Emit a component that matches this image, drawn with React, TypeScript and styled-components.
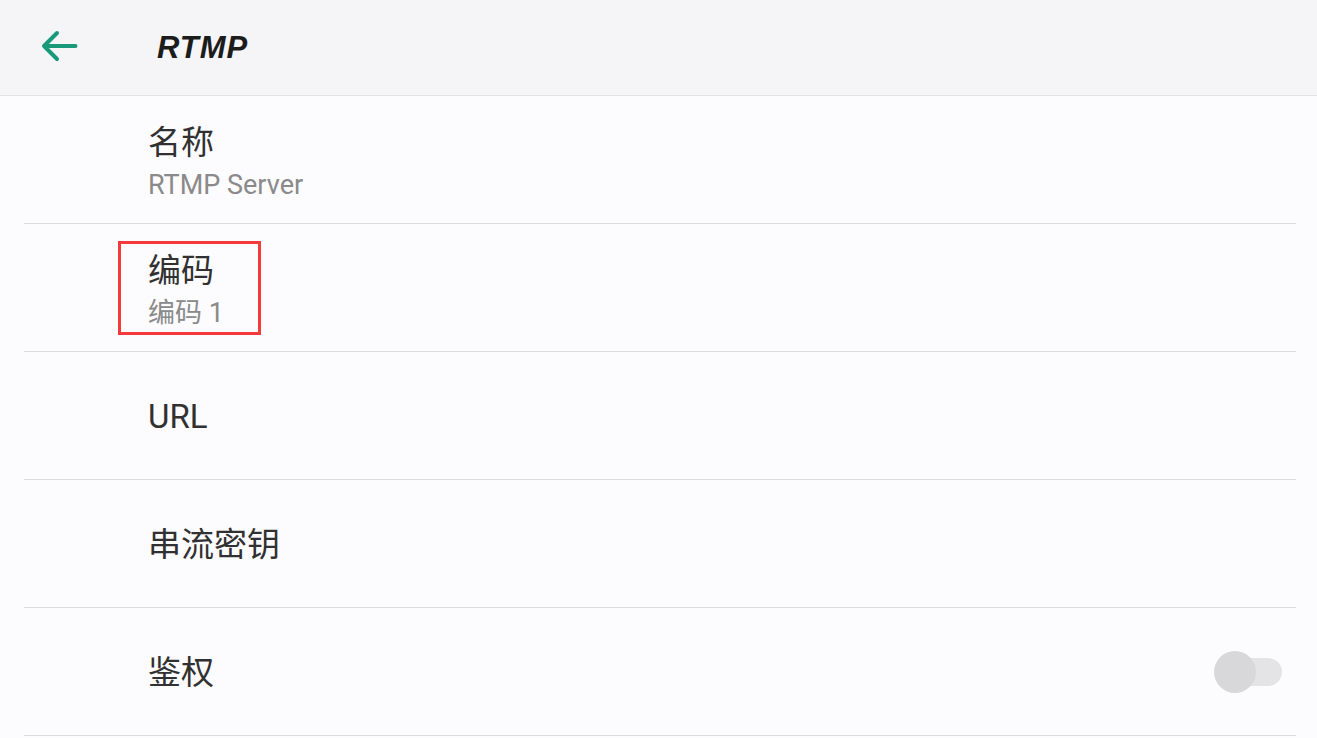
import React from 'react';
import styled, {createGlobalStyle} from 'styled-components';

const GlobalStyle = createGlobalStyle`
  html, body {
    margin: 0;
    padding: 0;
    background: #fcfbfd;
  }
  body {
    font-family: Roboto, "Noto Sans CJK SC", "Noto Sans", sans-serif;
  }
`;

const Page = styled.div`
  width: 1317px;
  min-height: 738px;
  background: #fcfbfd;
`;

const Header = styled.header`
  display: flex;
  align-items: center;
  height: 95px;
  padding-left: 40px;
  background: #f5f4f6;
  border-bottom: 1px solid #e2e1e3;
`;

const BackIcon = styled.svg`
  width: 38px;
  height: 36px;
  margin-bottom: 4px;
  flex-shrink: 0;
`;

const Title = styled.h1`
  margin: 0 0 0 79px;
  font-family: "Liberation Sans", Arial, sans-serif;
  font-size: 31px;
  font-weight: 700;
  font-style: italic;
  letter-spacing: 1px;
  color: #1c1c1c;
`;

const List = styled.div`
  margin: 0 21px 0 24px;
`;

const Row = styled.div`
  position: relative;
  display: flex;
  align-items: center;
  justify-content: space-between;
  height: 127px;
  padding-left: 124px;
  padding-right: 14px;
  border-bottom: 1px solid #dcdbdd;
`;

const TextBlock = styled.div<{$twoLine?: boolean}>`
  display: flex;
  flex-direction: column;
  padding-top: ${p => (p.$twoLine ? '5px' : '3px')};
`;

const Primary = styled.div`
  font-size: 33px;
  line-height: 40px;
  color: #313131;
`;

const Secondary = styled.div`
  margin-top: 5px;
  font-size: 27px;
  line-height: 34px;
  color: #8a8a8a;
`;

const Highlight = styled.div`
  position: absolute;
  left: 94px;
  top: 17px;
  width: 137px;
  height: 88px;
  border: 3px solid #f43a3a;
  pointer-events: none;
`;

const Switch = styled.div`
  position: relative;
  width: 68px;
  height: 42px;
`;

const Track = styled.div`
  position: absolute;
  right: 0;
  top: 7px;
  width: 54px;
  height: 28px;
  border-radius: 14px;
  background: #e4e3e5;
`;

const Thumb = styled.div`
  position: absolute;
  left: 0;
  top: 0;
  width: 42px;
  height: 42px;
  border-radius: 50%;
  background: #d8d7d9;
`;

type Item = {
  title: string;
  value?: string;
  highlight?: boolean;
  toggle?: boolean;
};

const items: Item[] = [
  {title: '名称', value: 'RTMP Server'},
  {title: '编码', value: '编码 1', highlight: true},
  {title: 'URL'},
  {title: '串流密钥'},
  {title: '鉴权', toggle: true},
];

export default function App() {
  return (
    <Page>
      <GlobalStyle />
      <Header>
        <BackIcon viewBox="0 0 38 36">
          <path
            d="M4 18 H35.5 M4 18 L17 5 M4 18 L17 31"
            fill="none"
            stroke="#17997a"
            strokeWidth="4"
            strokeLinecap="round"
            strokeLinejoin="round"
          />
        </BackIcon>
        <Title>RTMP</Title>
      </Header>
      <List>
        {items.map(item => (
          <Row key={item.title}>
            <TextBlock $twoLine={!!item.value}>
              <Primary>{item.title}</Primary>
              {item.value ? <Secondary>{item.value}</Secondary> : null}
            </TextBlock>
            {item.toggle ? (
              <Switch>
                <Track />
                <Thumb />
              </Switch>
            ) : null}
            {item.highlight ? <Highlight /> : null}
          </Row>
        ))}
      </List>
    </Page>
  );
}
